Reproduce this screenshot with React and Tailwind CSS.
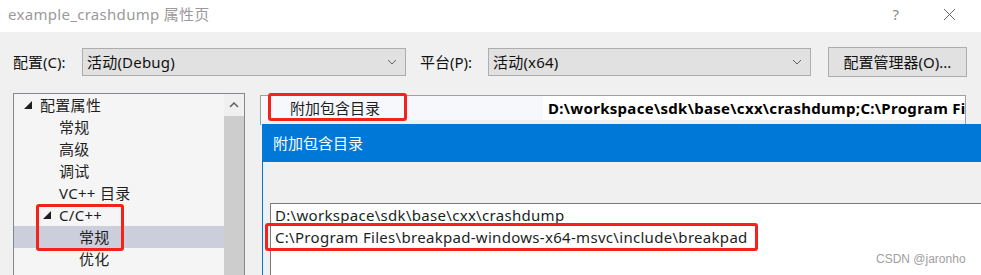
import React from 'react';

const font = { fontFamily: '"Noto Sans", "Noto Sans CJK SC", sans-serif' };

function Tri({ className }) {
  return (
    <svg width="8" height="8" viewBox="0 0 8 8" className={className}>
      <polygon points="8,0 8,8 0,8" fill="#1e1e1e" />
    </svg>
  );
}

function Chevron() {
  return (
    <svg width="10" height="6" viewBox="0 0 10 6" className="shrink-0">
      <polyline points="1,1 5,5 9,1" fill="none" stroke="#606060" strokeWidth="1" />
    </svg>
  );
}

function Combo({ text, className }) {
  return (
    <div className={`flex items-center justify-between h-[28px] border border-[#adadad] bg-[#e1e1e1] pl-[4px] pr-[8px] ${className}`}>
      <span className="text-[15px] tracking-[0.2px] text-[#111]">{text}</span>
      <Chevron />
    </div>
  );
}

const treeItems = [
  { label: '配置属性', indent: 'pl-[10px]', tri: true },
  { label: '常规', indent: 'pl-[45px]' },
  { label: '高级', indent: 'pl-[45px]' },
  { label: '调试', indent: 'pl-[45px]' },
  { label: 'VC++ 目录', indent: 'pl-[45px]' },
  { label: 'C/C++', indent: 'pl-[29px]', tri: true },
  { label: '常规', indent: 'pl-[65px]', selected: true },
  { label: '优化', indent: 'pl-[65px]' },
];

export default function App() {
  return (
    <div className="relative w-[981px] h-[275px] overflow-hidden bg-[#f0f0f0]" style={font}>
      {/* title bar */}
      <div className="flex items-center h-[32px] bg-white pl-[8px]">
        <span className="text-[15px] tracking-[0.3px] text-[#9a9a9a] -mt-[4px]">example_crashdump 属性页</span>
        <span className="ml-auto text-[15px] text-[#8a8a8a] -mt-[4px]">?</span>
        <svg width="13" height="13" viewBox="0 0 13 13" className="ml-[44px] mr-[25px] -mt-[4px]">
          <path d="M1 1 L12 12 M12 1 L1 12" stroke="#6a6a6a" strokeWidth="1" />
        </svg>
      </div>

      {/* config row */}
      <div className="flex items-center h-[30px] mt-[15px] pl-[13px]">
        <span className="text-[15px] text-[#111] w-[69px]">配置(C):</span>
        <Combo text="活动(Debug)" className="w-[324px]" />
        <span className="text-[15px] text-[#111] ml-[14px] w-[68px]">平台(P):</span>
        <Combo text="活动(x64)" className="w-[323px]" />
        <div className="ml-[17px] w-[139px] h-[30px] border border-[#adadad] bg-[#e1e1e1] flex items-center justify-center text-[15px] text-[#111]">
          配置管理器(O)...
        </div>
      </div>

      {/* body */}
      <div className="flex mt-[16px]">
        <div className="ml-[13px] w-[232px] h-[190px] border border-[#828790] bg-[#f5f5f5] flex">
          <div className="flex-1">
            {treeItems.map((it, i) => (
              <div key={i} className={`flex items-center h-[22px] ${it.indent} ${it.selected ? 'bg-[#cccedb]' : ''}`}>
                {it.tri && <Tri className="mr-[8px]" />}
                <span className="text-[15px] tracking-[0.3px] text-[#1e1e1e]">{it.label}</span>
              </div>
            ))}
          </div>
          <div className="w-[20px] flex flex-col bg-[#f0f0f0]">
            <div className="h-[22px] flex items-center justify-center">
              <svg width="10" height="6" viewBox="0 0 10 6">
                <polyline points="1,5 5,1 9,5" fill="none" stroke="#606060" strokeWidth="1.5" />
              </svg>
            </div>
            <div className="flex-1 bg-[#cdcdcd]" />
          </div>
        </div>

        <div className="ml-[15px] mt-[2px] w-[706px] h-[30px] border-t border-r border-l border-[#a0a0a0] flex">
          <div className="w-[282px] h-[24px] bg-[#f6f8fb] flex items-center pl-[29px] text-[15px] text-[#1e1e1e]">附加包含目录</div>
          <div className="flex-1 h-[24px] bg-white flex items-center pl-[5px] overflow-hidden whitespace-nowrap text-[15px] tracking-[0.3px] font-bold text-black">
            D:\workspace\sdk\base\cxx\crashdump;C:\Program Files\breakpad-windows-x64-msvc\include\breakpad
          </div>
        </div>
      </div>

      {/* overlapping dialog window */}
      <div className="absolute left-[262px] top-[124px] right-0 bottom-0 border-l border-[#0078d7] bg-[#f0f0f0] flex flex-col">
        <div className="h-[38px] bg-[#0078d7] flex items-center pl-[10px] text-[15px] text-white">附加包含目录</div>
        <div className="flex-1 pt-[41px] pl-[7px]">
          <div className="h-full border-t border-l border-[#7a7a7a] bg-white pl-[4px]">
            <div className="h-[22px] flex items-center text-[15px] tracking-[0.3px] text-[#1e1e1e]">D:\workspace\sdk\base\cxx\crashdump</div>
            <div className="h-[22px] flex items-center text-[15px] tracking-[0.3px] text-[#1e1e1e]">C:\Program Files\breakpad-windows-x64-msvc\include\breakpad</div>
          </div>
        </div>
      </div>

      {/* red annotation boxes */}
      <div className="absolute left-[268px] top-[93px] w-[139px] h-[28px] border-[3px] border-[#f5221b] rounded-[3px]" />
      <div className="absolute left-[36px] top-[204px] w-[88px] h-[47px] border-[3px] border-[#f5221b] rounded-[3px]" />
      <div className="absolute left-[265px] top-[223px] w-[493px] h-[28px] border-[3px] border-[#f5221b] rounded-[3px]" />

      <span className="absolute left-[876px] top-[250px] text-[12px] text-[#a0a0a0]" style={{ fontFamily: '"Liberation Sans", sans-serif' }}>CSDN @jaronho</span>
    </div>
  );
}
